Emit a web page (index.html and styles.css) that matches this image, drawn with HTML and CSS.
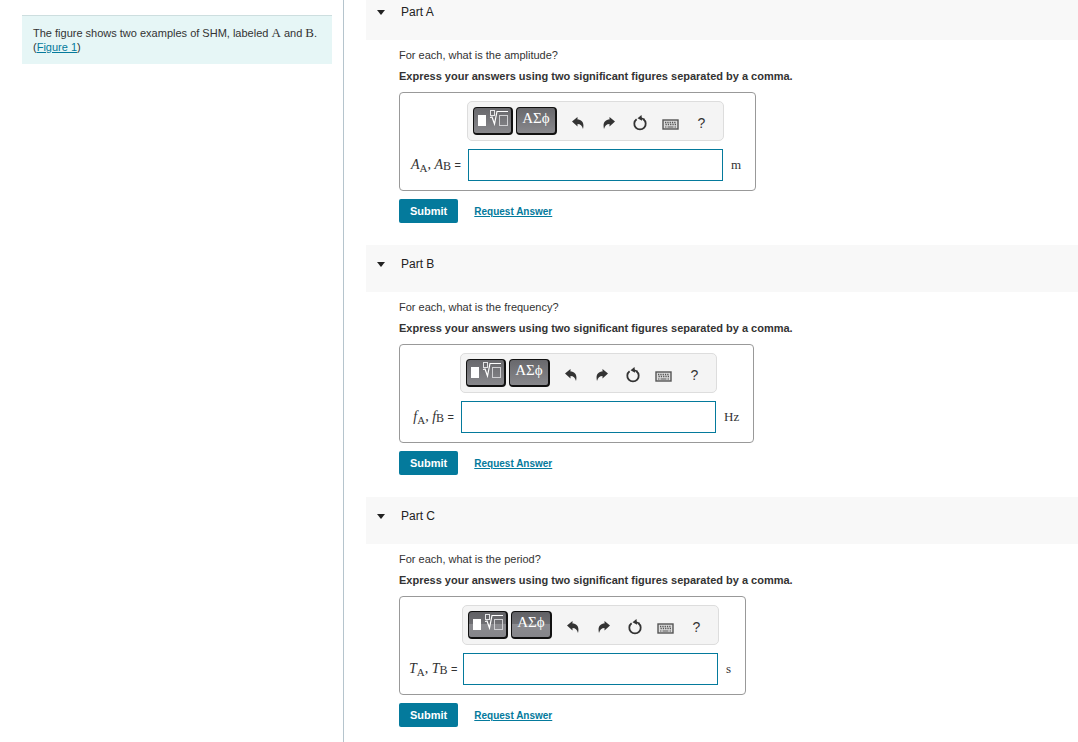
FILE: index.html
```html
<!DOCTYPE html>
<html lang="en">
<head>
    <meta charset="UTF-8">
    <meta name="viewport" content="width=device-width, initial-scale=1.0">
    <title>Simple Harmonic Motion</title>
    <link rel="stylesheet" href="styles.css">
</head>
<body>

<!-- Shared icons -->
<svg class="sprite" aria-hidden="true">
    <symbol id="icon-root" viewBox="0 0 34 20">
        <rect x="2" y="7" width="8" height="11" fill="#fff"/>
        <rect x="14.500" y="2.500" width="4" height="5" fill="none" stroke="#e4e4e6"/>
        <path d="M14 9.500l2-.5 2.500 7L21 3.500h11" fill="none" stroke="#fff" stroke-width="1.200"/>
        <rect x="23.500" y="7.500" width="8" height="10" fill="none" stroke="#d0d0d3"/>
    </symbol>
    <symbol id="icon-undo" viewBox="0 0 12 12">
        <path d="M0 4.500L5.500 0v2.500C10 2.500 12.500 6 11 12 10 8.500 8.500 7 5.500 7v2.500z" fill="#333"/>
    </symbol>
    <symbol id="icon-redo" viewBox="0 0 12 12">
        <path d="M12 4.500L6.500 0v2.500C2 2.500-.5 6 1 12 2 8.500 3.500 7 6.500 7v2.500z" fill="#333"/>
    </symbol>
    <symbol id="icon-reset" viewBox="0 0 14 16">
        <path d="M3.600 4.200A5.700 5.700 0 1 0 10.400 4.200" fill="none" stroke="#333" stroke-width="1.800"/>
        <path d="M4.500 3.200L8.500 0l.6 5.800z" fill="#333"/>
        <path d="M7.500 3l4 1.600" stroke="#333" stroke-width="1.600"/>
    </symbol>
    <symbol id="icon-keyboard" viewBox="0 0 17 11">
        <rect x="1" y="1" width="15" height="9" fill="#ddd" stroke="#555" stroke-width="1.400"/>
        <path d="M3 3.500h11M3.500 5.500h11" stroke="#555" stroke-width="1.400" stroke-dasharray="1.300 1"/>
        <path d="M3 8h1.500M5.500 8h6M12.500 8h1.500" stroke="#555" stroke-width="1.200"/>
    </symbol>
</svg>

<div class="page">
    <aside class="sidebar">
        <div class="problem">
            The figure shows two examples of SHM, labeled <span class="symbol">A</span> and <span class="symbol">B</span>.<br>
            (<a href="#figure1">Figure 1</a>)
        </div>
    </aside>

    <main class="parts">
        <section class="part">
            <h2 class="part-header"><span class="arrow"></span>Part A</h2>
            <form class="part-body">
                <p class="question">For each, what is the amplitude?</p>
                <p class="instructions">Express your answers using two significant figures separated by a comma.</p>
                <div class="answer answer-a">
                    <div class="toolbar">
                        <button type="button" class="palette" aria-label="Templates"><svg class="root"><use href="#icon-root"/></svg></button>
                        <button type="button" class="palette greek">ΑΣϕ</button>
                        <button type="button" class="tool" aria-label="Undo"><svg class="turn"><use href="#icon-undo"/></svg></button>
                        <button type="button" class="tool" aria-label="Redo"><svg class="turn"><use href="#icon-redo"/></svg></button>
                        <button type="button" class="tool" aria-label="Reset"><svg class="reset"><use href="#icon-reset"/></svg></button>
                        <button type="button" class="tool" aria-label="Keyboard shortcuts"><svg class="keyboard"><use href="#icon-keyboard"/></svg></button>
                        <button type="button" class="tool">?</button>
                    </div>
                    <label for="amplitude"><i>A</i><sub>A</sub>, <i>A</i><sub class="high">B</sub> <span class="equals">=</span></label>
                    <input type="text" id="amplitude">
                    <span class="unit">m</span>
                </div>
                <div class="actions">
                    <button type="submit" class="submit">Submit</button>
                    <a href="#answer-a">Request Answer</a>
                </div>
            </form>
        </section>

        <section class="part">
            <h2 class="part-header"><span class="arrow"></span>Part B</h2>
            <form class="part-body">
                <p class="question">For each, what is the frequency?</p>
                <p class="instructions">Express your answers using two significant figures separated by a comma.</p>
                <div class="answer answer-b">
                    <div class="toolbar">
                        <button type="button" class="palette" aria-label="Templates"><svg class="root"><use href="#icon-root"/></svg></button>
                        <button type="button" class="palette greek">ΑΣϕ</button>
                        <button type="button" class="tool" aria-label="Undo"><svg class="turn"><use href="#icon-undo"/></svg></button>
                        <button type="button" class="tool" aria-label="Redo"><svg class="turn"><use href="#icon-redo"/></svg></button>
                        <button type="button" class="tool" aria-label="Reset"><svg class="reset"><use href="#icon-reset"/></svg></button>
                        <button type="button" class="tool" aria-label="Keyboard shortcuts"><svg class="keyboard"><use href="#icon-keyboard"/></svg></button>
                        <button type="button" class="tool">?</button>
                    </div>
                    <label for="frequency"><i>f</i><sub>A</sub>, <i>f</i><sub class="high">B</sub> <span class="equals">=</span></label>
                    <input type="text" id="frequency">
                    <span class="unit">Hz</span>
                </div>
                <div class="actions">
                    <button type="submit" class="submit">Submit</button>
                    <a href="#answer-b">Request Answer</a>
                </div>
            </form>
        </section>

        <section class="part">
            <h2 class="part-header"><span class="arrow"></span>Part C</h2>
            <form class="part-body">
                <p class="question">For each, what is the period?</p>
                <p class="instructions">Express your answers using two significant figures separated by a comma.</p>
                <div class="answer answer-c">
                    <div class="toolbar">
                        <button type="button" class="palette split" aria-label="Templates"><svg class="root"><use href="#icon-root"/></svg></button>
                        <button type="button" class="palette greek split">ΑΣϕ</button>
                        <button type="button" class="tool" aria-label="Undo"><svg class="turn"><use href="#icon-undo"/></svg></button>
                        <button type="button" class="tool" aria-label="Redo"><svg class="turn"><use href="#icon-redo"/></svg></button>
                        <button type="button" class="tool" aria-label="Reset"><svg class="reset"><use href="#icon-reset"/></svg></button>
                        <button type="button" class="tool" aria-label="Keyboard shortcuts"><svg class="keyboard"><use href="#icon-keyboard"/></svg></button>
                        <button type="button" class="tool">?</button>
                    </div>
                    <label for="period"><i>T</i><sub>A</sub>, <i>T</i><sub class="high">B</sub> <span class="equals">=</span></label>
                    <input type="text" id="period">
                    <span class="unit">s</span>
                </div>
                <div class="actions">
                    <button type="submit" class="submit">Submit</button>
                    <a href="#answer-c">Request Answer</a>
                </div>
            </form>
        </section>
    </main>
</div>

</body>
</html>
```
FILE: styles.css
```css
* {
    box-sizing: border-box;
}
body {
    margin: 0;
    font-family: "Liberation Sans", Arial, sans-serif;
    font-size: 11px;
    color: #333;
    background: #fff;
}
a {
    color: #047a9c;
}
.sprite {
    display: none;
}
.page {
    display: flex;
    min-height: 100vh;
}

/* Problem statement */
.sidebar {
    flex: 0 0 344px;
    padding: 15px 11px 0 22px;
    border-right: 1px solid #b5c4cd;
}
.problem {
    padding: 10px 11px;
    line-height: 14px;
    background: #e6f6f6;
    border-top: 1px solid #cddedf;
}
.symbol {
    font-family: "Liberation Serif", "Times New Roman", serif;
    font-size: 13px;
    line-height: 1;
}

/* Parts */
.parts {
    flex: 1;
    min-width: 0;
    padding-left: 22px;
}
.part-header {
    display: flex;
    align-items: center;
    margin: 0;
    padding: 11px 11px 20px;
    font-size: 12px;
    font-weight: normal;
    line-height: 16px;
    color: #222;
    background: #f8f8f8;
}
.part:first-child .part-header {
    padding-top: 4px;
}
.arrow {
    margin-right: 16px;
    border: 4px solid transparent;
    border-top: 5px solid #222;
    border-bottom: 0;
}
.part-body {
    padding: 8px 0 22px 33px;
}
.question, .instructions {
    margin: 0;
    line-height: 14px;
}
.instructions {
    margin: 7px 0 9px;
    font-weight: bold;
}

/* Answer box */
.answer {
    display: inline-grid;
    grid-template-columns: 58px 257px auto;
    row-gap: 8px;
    align-items: center;
    padding: 8px 14px 9px 9px;
    vertical-align: top;
    border: 1px solid #999;
    border-radius: 4px;
}
.answer-b {
    grid-template-columns: 51px 257px auto;
}
.answer-c {
    grid-template-columns: 53px 257px auto;
}
.toolbar {
    grid-column: 2;
    display: flex;
    align-items: center;
    gap: 3px;
    height: 40px;
    padding: 0 5px;
    background: #f4f4f4;
    border: 1px solid #ddd;
    border-radius: 5px;
}
.toolbar button {
    display: flex;
    justify-content: center;
    align-items: center;
    height: 28px;
    padding: 0;
    border: 0;
}
.toolbar .palette {
    width: 40px;
    color: #fff;
    background: linear-gradient(#68686c, #88888c);
    border: 1px solid #111;
    border-bottom-width: 2px;
    border-right-width: 2px;
    border-radius: 4px;
}
.toolbar .split {
    background: linear-gradient(#606064, #707074 50%, #8b8b8f 50%, #85858a);
}
.toolbar .greek {
    width: 41px;
    margin-right: 2px;
    padding-bottom: 5px;
    font-family: "Liberation Serif", "Times New Roman", serif;
    font-size: 15px;
}
.toolbar .tool {
    width: 31px;
    margin-right: -3px;
    padding-top: 3px;
    font-family: inherit;
    font-size: 14px;
    color: #333;
    background: none;
}
.root {
    flex: none;
    width: 34px;
    height: 20px;
    margin-bottom: 6px;
}
.turn {
    width: 12px;
    height: 12px;
}
.reset {
    width: 14px;
    height: 16px;
}
.keyboard {
    width: 17px;
    height: 11px;
    margin-top: 4px;
}
.answer label, .unit {
    font-family: "Liberation Serif", "Times New Roman", serif;
    font-size: 14px;
    line-height: 16px;
    white-space: nowrap;
}
.answer label {
    grid-column: 1;
    padding-right: 6px;
    text-align: right;
}
.answer sub {
    font-size: 11px;
    line-height: 1;
    vertical-align: -3px;
}
.answer .high {
    font-size: 12px;
    vertical-align: -1px;
}
.equals {
    font-family: "Liberation Sans", Arial, sans-serif;
    font-size: 11px;
}
.answer input {
    height: 32px;
    margin: 0 1px;
    padding: 0 6px;
    font-size: 14px;
    background: #fff;
    border: 1px solid #047a9c;
}
.unit {
    padding-left: 7px;
    font-size: 13px;
}

/* Submit row */
.actions {
    display: flex;
    align-items: center;
    gap: 16px;
    margin-top: 8px;
}
.submit {
    height: 24px;
    padding: 0 11px;
    font-family: inherit;
    font-size: 11px;
    font-weight: bold;
    color: #fff;
    background: #047a9c;
    border: 0;
    border-radius: 2px;
}
.actions a {
    font-size: 10px;
    font-weight: bold;
}
```
